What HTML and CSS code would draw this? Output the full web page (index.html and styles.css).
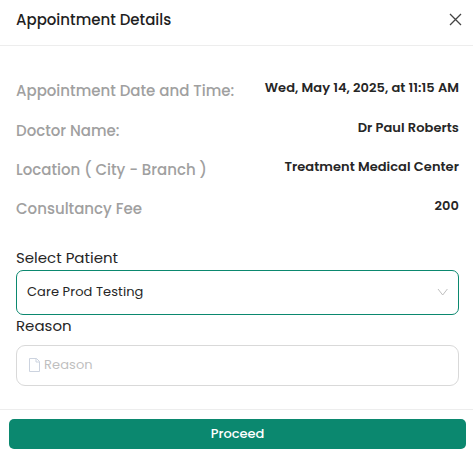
FILE: index.html
```html
<!DOCTYPE html>
<html lang="en">
<head>
    <meta charset="UTF-8">
    <meta name="viewport" content="width=device-width, initial-scale=1.0">
    <title>Appointment Details</title>
    <link rel="stylesheet" href="styles.css">
</head>
<body>
    <div class="modal">
        <header class="modal-header">
            <span class="modal-title">Appointment Details</span>
            <button class="close" aria-label="Close">
                <svg width="13" height="13" viewBox="0 0 13 13" fill="none" stroke="#444" stroke-width="1.3"><path d="M1 1l11 11M12 1L1 12"/></svg>
            </button>
        </header>
        <main class="modal-body">
            <div class="details">
                <div class="row"><span class="label">Appointment Date and Time:</span><span class="value">Wed, May 14, 2025, at 11:15 AM</span></div>
                <div class="row"><span class="label">Doctor Name:</span><span class="value">Dr Paul Roberts</span></div>
                <div class="row"><span class="label">Location ( City - Branch )</span><span class="value">Treatment Medical Center</span></div>
                <div class="row"><span class="label">Consultancy Fee</span><span class="value">200</span></div>
            </div>
            <div class="field-label">Select Patient</div>
            <div class="select">
                <span>Care Prod Testing</span>
                <svg width="12" height="12" viewBox="0 0 12 12" fill="none" stroke="#bfbfbf"><path d="M1 3l4.700 6L10.400 3"/></svg>
            </div>
            <div class="field-label">Reason</div>
            <div class="input">
                <svg width="12" height="14" viewBox="0 0 12 14" fill="none" stroke="#ccd3df"><path d="M.5 .5h7L10.500 3.500v10H.5zM7 .5v3.500h3.500"/></svg>
                <span class="placeholder">Reason</span>
            </div>
        </main>
        <footer class="modal-footer">
            <button class="proceed">Proceed</button>
        </footer>
    </div>
</body>
</html>
```
FILE: styles.css
```css
* {
    box-sizing: border-box;
}
body {
    margin: 0;
    background: #fff;
    color: #262626;
    font-family: Poppins, Inter, sans-serif;
}
.modal {
    height: 456px;
    display: flex;
    flex-direction: column;
    overflow: hidden;
}
.modal-header {
    height: 46px;
    padding: 0 11px 6px 16px;
    display: flex;
    align-items: center;
    justify-content: space-between;
    border-bottom: 1px solid #ededed;
}
.modal-title {
    font-size: 15px;
    font-weight: 500;
    color: #1f1f1f;
}
.close {
    display: flex;
    padding: 0;
    border: none;
    background: none;
    cursor: pointer;
}
.modal-body {
    flex: 1;
    padding: 25px 14px 0 16px;
}
.details {
    display: grid;
    grid-template-rows: 40px 39px 39px 39px;
    margin-bottom: 17px;
}
.row {
    display: flex;
    align-items: flex-start;
    justify-content: space-between;
    white-space: nowrap;
}
.label {
    padding-top: 8px;
    font-size: 15px;
    line-height: 24px;
    font-weight: 500;
    color: #a0a0a0;
}
.value {
    padding-top: 7px;
    font-size: 13px;
    line-height: 20px;
    font-weight: 600;
    letter-spacing: 0.05px;
}
.field-label {
    height: 25px;
    font-size: 15px;
    line-height: 25px;
}
.select,
.input {
    display: flex;
    align-items: center;
    width: 443px;
    border: 1px solid #d9d9d9;
    background: #fff;
    font-size: 13px;
}
.select {
    height: 45px;
    margin-bottom: -2px;
    padding: 0 9px 1px 10px;
    justify-content: space-between;
    border-color: #0b886f;
    border-radius: 7px;
    letter-spacing: 0.08px;
}
.input {
    height: 41px;
    margin-top: 7px;
    padding: 0 11px 1px 12px;
    gap: 3px;
    border-radius: 9px;
}
.placeholder {
    color: #bfbfbf;
    letter-spacing: 0.1px;
}
.modal-footer {
    height: 47px;
    padding: 9px 7px 7px 9px;
    border-top: 1px solid #ededed;
}
.proceed {
    display: block;
    width: 100%;
    height: 30px;
    padding: 0;
    border: none;
    border-radius: 5px;
    background: #0b886f;
    color: #fff;
    font-family: inherit;
    font-size: 13px;
    font-weight: 500;
    cursor: pointer;
}
```
